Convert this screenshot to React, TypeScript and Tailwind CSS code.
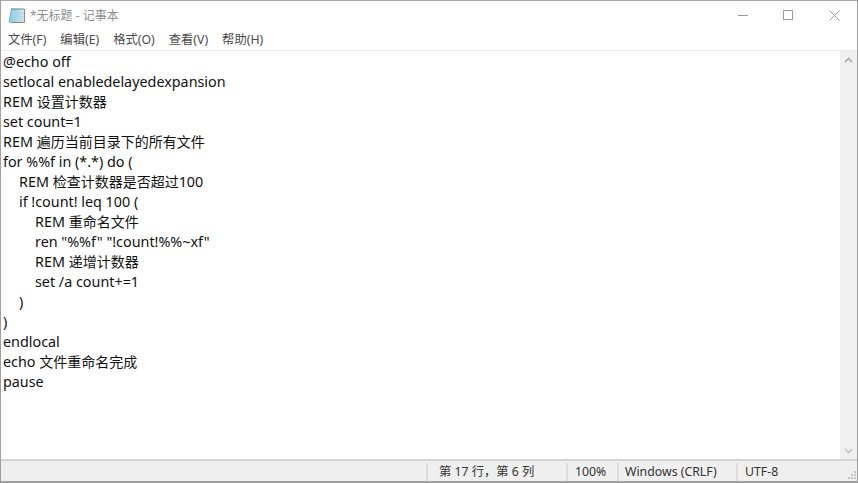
const FONT = "font-['Noto_Sans','Noto_Sans_CJK_SC',sans-serif]";

const lines: { t: string; i: string }[] = [
  { t: "@echo off", i: "" },
  { t: "setlocal enabledelayedexpansion", i: "" },
  { t: "REM 设置计数器", i: "" },
  { t: "set count=1", i: "" },
  { t: "REM 遍历当前目录下的所有文件", i: "" },
  { t: "for %%f in (*.*) do (", i: "" },
  { t: "REM 检查计数器是否超过100", i: "pl-4" },
  { t: "if !count! leq 100 (", i: "pl-4" },
  { t: "REM 重命名文件", i: "pl-8" },
  { t: 'ren "%%f" "!count!%%~xf"', i: "pl-8" },
  { t: "REM 递增计数器", i: "pl-8" },
  { t: "set /a count+=1", i: "pl-8" },
  { t: ")", i: "pl-4" },
  { t: ")", i: "" },
  { t: "endlocal", i: "" },
  { t: "echo 文件重命名完成", i: "" },
  { t: "pause", i: "" },
];

function Runs({ text }: { text: string }) {
  const parts = text.split(/([\u4e00-\u9fff]+)/);
  return (
    <>
      {parts.map((p, n) =>
        n % 2 === 1 ? (
          <span key={n} className="text-[14px]">
            {p}
          </span>
        ) : (
          <span key={n}>{p}</span>
        ),
      )}
    </>
  );
}

function NotepadIcon() {
  return (
    <svg width="18" height="17" viewBox="0 0 18 17" className="shrink-0">
      <defs>
        <linearGradient id="pg" x1="0" y1="0" x2="1" y2="0">
          <stop offset="0" stopColor="#7fc4de" />
          <stop offset="1" stopColor="#d5edf6" />
        </linearGradient>
      </defs>
      <path d="M3.5 1.5H16.5V15.5H1Z" fill="url(#pg)" />
      <path d="M3 5.5H15.5M2.6 7.5H15.5M2.2 9.5H15.5M1.8 11.5H15.5M1.4 13.5H15.5" stroke="#a9d6e8" strokeWidth="0.8" />
      <path d="M16.5 2V15.5H3" fill="none" stroke="#a08a5c" strokeWidth="1" />
      <path d="M3.5 2H16" stroke="#5f6f78" strokeWidth="1.6" strokeDasharray="1 1" />
      <path d="M3.5 1.5L1 15.5" stroke="#6aa5c0" strokeWidth="0.8" />
    </svg>
  );
}

function Menu({ label }: { label: string }) {
  return <span>{label}</span>;
}

export default function App() {
  return (
    <div className={`${FONT} flex h-[483px] w-[858px] flex-col overflow-hidden border-x border-b-2 border-x-[#a0a0a0] border-b-[#a0a0a0] bg-white`}>
      <div className="flex h-[30px] shrink-0 items-center border-t border-[#a8a8a8] pl-[7px]">
        <NotepadIcon />
        <span className="ml-[4px] text-[12px] leading-none text-[#8f8f8f]">*无标题 - 记事本</span>
        <div className="ml-auto flex items-center pr-[17px]">
          <svg width="11" height="11" viewBox="0 0 11 11"><path d="M0 5.5H10" stroke="#9a9a9a" /></svg>
          <svg width="11" height="11" viewBox="0 0 11 11" className="ml-[34px]"><rect x="0.5" y="0.5" width="9" height="9" fill="none" stroke="#9a9a9a" /></svg>
          <svg width="11" height="11" viewBox="0 0 11 11" className="ml-[35px]"><path d="M0.5 0.5L10.5 10.5M10.5 0.5L0.5 10.5" stroke="#9a9a9a" /></svg>
        </div>
      </div>
      <div className="flex h-[20px] shrink-0 items-center gap-[14px] pl-[7px] text-[12.3px] leading-none text-[#4a4a4a]">
        <Menu label="文件(F)" />
        <Menu label="编辑(E)" />
        <Menu label="格式(O)" />
        <Menu label="查看(V)" />
        <Menu label="帮助(H)" />
      </div>
      <div className="flex min-h-0 flex-1 border-t border-[#ececec]">
        <div className="flex-1 pl-[2px] pt-px text-[14.35px] leading-[20px] text-[#111]">
          {lines.map((l, n) => (
            <div key={n} className={`h-[20px] whitespace-pre ${l.i}`}>
              <Runs text={l.t} />
            </div>
          ))}
        </div>
        <div className="flex w-[17px] shrink-0 flex-col justify-between bg-[#f0f0f0]">
          <div className="flex h-[17px] items-center justify-center">
            <svg width="9" height="6" viewBox="0 0 9 6"><path d="M1 5L4.5 1.5L8 5" fill="none" stroke="#a6a6a6" strokeWidth="1.6" /></svg>
          </div>
          <div className="flex h-[17px] items-center justify-center">
            <svg width="9" height="6" viewBox="0 0 9 6"><path d="M1 1L4.5 4.5L8 1" fill="none" stroke="#c2c2c2" strokeWidth="1.6" /></svg>
          </div>
        </div>
      </div>
      <div className="relative flex h-[22px] shrink-0 items-center border-t-2 border-[#d4d4d4] bg-[#efefef] pt-[2px] text-[12.3px] leading-none text-[#333]">
        <div className="w-[425px] shrink-0" />
        <div className="flex h-[18px] w-[140px] items-center border-l-2 border-[#dcdcdc] pl-[11px]">第 17 行，第 6 列</div>
        <div className="flex h-[18px] w-[51px] items-center border-l-2 border-[#dcdcdc] pl-[7px]">100%</div>
        <div className="flex h-[18px] w-[119px] items-center border-l-2 border-[#dcdcdc] pl-[6px]">Windows (CRLF)</div>
        <div className="flex h-[18px] flex-1 items-center border-l-2 border-[#dcdcdc] pl-[7px]">UTF-8</div>
        <svg width="10" height="10" viewBox="0 0 10 10" className="absolute bottom-0 right-0">
          <path d="M7 0h2v2H7zM4 3h2v2H4zM7 3h2v2H7zM1 6h2v2H1zM4 6h2v2H4zM7 6h2v2H7z" fill="#c4c4c4" />
        </svg>
      </div>
    </div>
  );
}
